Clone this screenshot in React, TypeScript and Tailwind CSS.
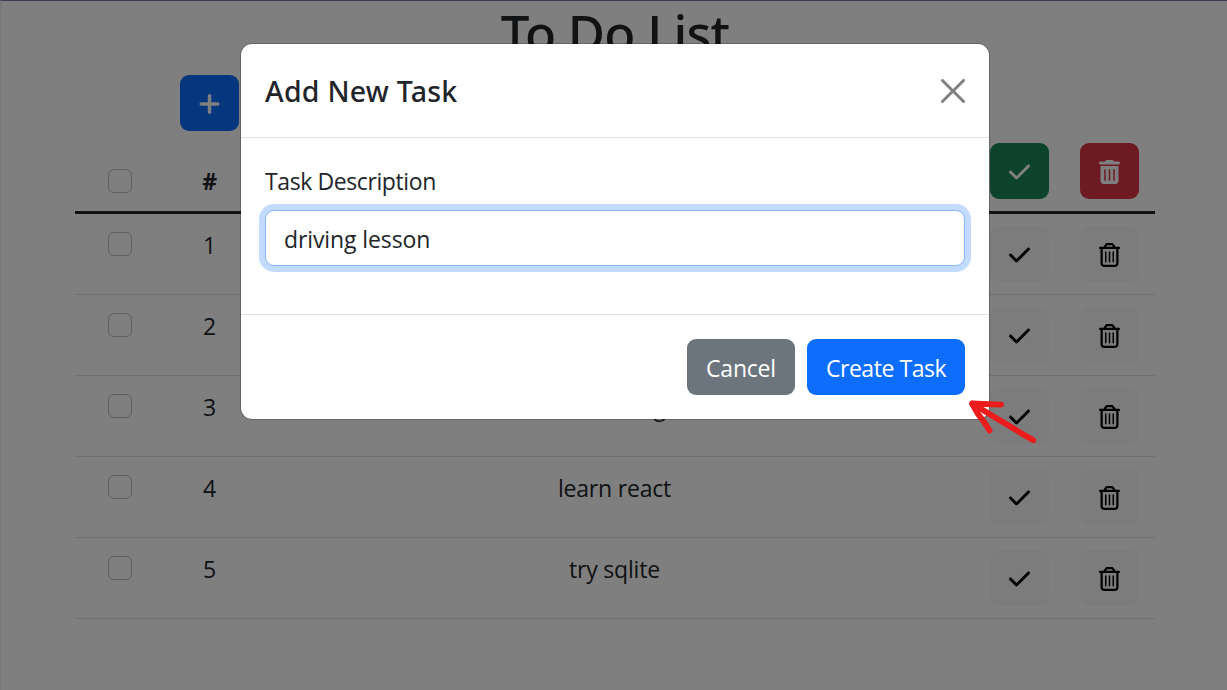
import React from "react";
import { FaCheck, FaPlus, FaRegTrashCan, FaTrashCan } from "react-icons/fa6";

const tasks = ["", "", "learn sing", "learn react", "try sqlite"];

const columns = "grid grid-cols-[90px_89px_721px_90px_90px]";

function Checkbox({ className = "" }: { className?: string }) {
  return (
    <span
      role="checkbox"
      aria-checked="false"
      className={`block h-6 w-6 rounded-[6px] border border-[#bfbfbf] bg-white ${className}`}
    />
  );
}

function IconButton({ className, children }: { className: string; children: React.ReactNode }) {
  return (
    <button className={`flex h-14 w-[59px] items-center justify-center rounded-[9px] pt-0.5 text-[24px] [&>svg]:w-[21px] ${className}`}>
      {children}
    </button>
  );
}

function TaskTable() {
  return (
    <div className="ml-[75px] w-[1080px]">
      <div className={`${columns} h-[83px] items-end border-b-[3px] border-[#212529] pb-3`}>
        <Checkbox className="mb-1.5 justify-self-center" />
        <div className="text-center font-bold leading-9">#</div>
        <div />
        <IconButton className="ml-[15px] bg-[#198754] text-white"><FaCheck /></IconButton>
        <IconButton className="ml-[15px] bg-[#dc3545] text-white"><FaTrashCan /></IconButton>
      </div>
      {tasks.map((task, i) => (
        <div key={i} className={`${columns} h-[81px] items-start border-b border-[#dee2e6] pt-3`}>
          <Checkbox className="mt-1.5 justify-self-center" />
          <div className="text-center leading-[38px]">{i + 1}</div>
          <div className="text-center leading-[38px]">{task}</div>
          <IconButton className="ml-[15px] bg-[#f8f9fa] text-black"><FaCheck /></IconButton>
          <IconButton className="ml-[15px] bg-[#f8f9fa] text-black"><FaRegTrashCan /></IconButton>
        </div>
      ))}
    </div>
  );
}

function TaskDialog() {
  return (
    <div
      role="dialog"
      className="absolute left-[240px] top-[43px] flex h-[377px] w-[750px] flex-col rounded-[12px] border border-black/20 bg-white bg-clip-padding"
    >
      <div className="flex h-[94px] items-center justify-between border-b border-[#dee2e6] px-6">
        <h2 className="pt-0.5 font-['Noto_Sans',sans-serif] text-[28.5px] font-medium leading-[45px] tracking-[0.25px]">Add New Task</h2>
        <button aria-label="Close" className="text-[#808080]">
          <svg width="24" height="24" viewBox="0 0 16 16" fill="currentColor">
            <path d="M.293.293a1 1 0 0 1 1.414 0L8 6.586 14.293.293a1 1 0 1 1 1.414 1.414L9.414 8l6.293 6.293a1 1 0 0 1-1.414 1.414L8 9.414l-6.293 6.293a1 1 0 0 1-1.414-1.414L6.586 8 .293 1.707a1 1 0 0 1 0-1.414z" />
          </svg>
        </button>
      </div>
      <div className="flex h-[176px] flex-col px-6 pt-6">
        <label className="mb-[11px] block pt-px leading-9 tracking-[-0.4px]">Task Description</label>
        <input
          defaultValue="driving lesson"
          className="h-14 w-[700px] rounded-[9px] border border-[#86b7fe] bg-white px-[18px] pt-0.5 tracking-[-0.1px] outline-none ring-6 ring-[#c2dbfe]"
        />
      </div>
      <div className="flex flex-1 items-center justify-end gap-3 border-t border-[#dee2e6] px-6">
        <button className="h-14 w-[108px] rounded-[9px] bg-[#6c757d] pt-0.5 text-white">Cancel</button>
        <button className="h-14 w-[158px] rounded-[9px] bg-[#0d6efd] pt-0.5 tracking-[-0.45px] text-white">Create Task</button>
      </div>
    </div>
  );
}

export default function App() {
  return (
    <div className="relative h-[690px] w-[1227px] overflow-hidden bg-white font-['Open_Sans','Noto_Sans',sans-serif] text-[23px] tracking-[-0.2px] text-[#212529]">
      <div className="h-[690px] border-l border-t border-l-[#ececec] border-t-[#7a7a9e]">
        <div className="-ml-px -mt-px">
          <h1 className="h-[75px] pl-[3px] text-center font-['Noto_Sans',sans-serif] text-[51px] font-medium leading-[65px] tracking-[-0.8px]">To Do List</h1>
          <div className="ml-[180px] h-14">
            <IconButton className="bg-[#0d6efd] text-white"><FaPlus stroke="currentColor" strokeWidth="10" /></IconButton>
          </div>
          <TaskTable />
        </div>
      </div>
      <div className="absolute inset-0 bg-black/50">
        <TaskDialog />
        <svg className="absolute left-[960px] top-[390px]" width="90" height="60" viewBox="960 390 90 60" fill="none" stroke="#ea1c1c" strokeWidth="5.8" strokeLinecap="round" strokeLinejoin="round">
          <path d="M1033.3 440.3Q1004 423 972 403.5L1001 404.7M972 403.5L978 414Q984 421 989.5 430.5M972 403.5L981 409" />
        </svg>
      </div>
    </div>
  );
}
